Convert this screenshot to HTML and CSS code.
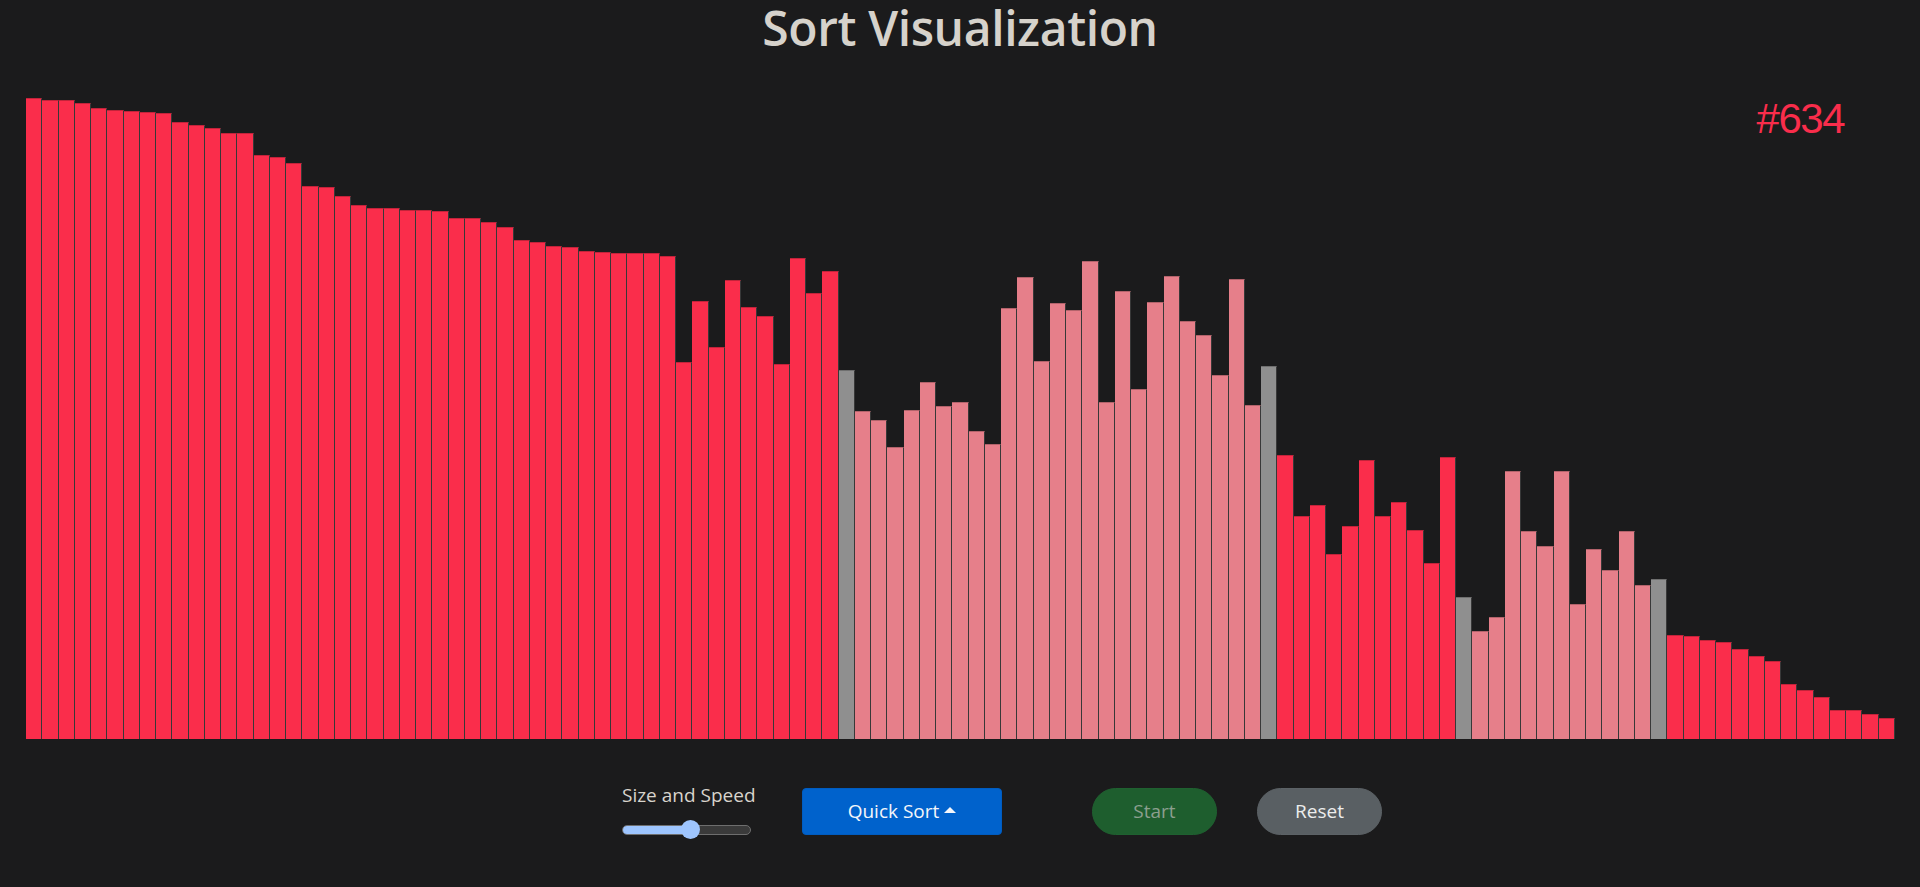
FILE: index.html
```html
<!DOCTYPE html>
<html lang="en">
<head>
<meta charset="utf-8">
<title>Sort Visualization</title>
<link rel="stylesheet" href="styles.css">
</head>
<body>
<h1 class="title">Sort Visualization</h1>
<div class="chart">
  <div class="counter">#634</div>
  <div class="bar red" style="height:641px"></div>
  <div class="bar red" style="height:639.3px"></div>
  <div class="bar red" style="height:639.3px"></div>
  <div class="bar red" style="height:636px"></div>
  <div class="bar red" style="height:631px"></div>
  <div class="bar red" style="height:629.3px"></div>
  <div class="bar red" style="height:628.3px"></div>
  <div class="bar red" style="height:627.3px"></div>
  <div class="bar red" style="height:626px"></div>
  <div class="bar red" style="height:617.3px"></div>
  <div class="bar red" style="height:614.3px"></div>
  <div class="bar red" style="height:611px"></div>
  <div class="bar red" style="height:606px"></div>
  <div class="bar red" style="height:606px"></div>
  <div class="bar red" style="height:584.3px"></div>
  <div class="bar red" style="height:582.3px"></div>
  <div class="bar red" style="height:576px"></div>
  <div class="bar red" style="height:553.3px"></div>
  <div class="bar red" style="height:552.3px"></div>
  <div class="bar red" style="height:543.3px"></div>
  <div class="bar red" style="height:534.3px"></div>
  <div class="bar red" style="height:530.7px"></div>
  <div class="bar red" style="height:530.7px"></div>
  <div class="bar red" style="height:529.3px"></div>
  <div class="bar red" style="height:529.3px"></div>
  <div class="bar red" style="height:528.3px"></div>
  <div class="bar red" style="height:520.7px"></div>
  <div class="bar red" style="height:520.7px"></div>
  <div class="bar red" style="height:517px"></div>
  <div class="bar red" style="height:512px"></div>
  <div class="bar red" style="height:499.3px"></div>
  <div class="bar red" style="height:497px"></div>
  <div class="bar red" style="height:493.3px"></div>
  <div class="bar red" style="height:492px"></div>
  <div class="bar red" style="height:488.3px"></div>
  <div class="bar red" style="height:487px"></div>
  <div class="bar red" style="height:485.7px"></div>
  <div class="bar red" style="height:485.7px"></div>
  <div class="bar red" style="height:485.7px"></div>
  <div class="bar red" style="height:483.3px"></div>
  <div class="bar red" style="height:376.7px"></div>
  <div class="bar red" style="height:438px"></div>
  <div class="bar red" style="height:391.7px"></div>
  <div class="bar red" style="height:459px"></div>
  <div class="bar red" style="height:432px"></div>
  <div class="bar red" style="height:423px"></div>
  <div class="bar red" style="height:375.3px"></div>
  <div class="bar red" style="height:480.7px"></div>
  <div class="bar red" style="height:445.7px"></div>
  <div class="bar red" style="height:468px"></div>
  <div class="bar gray" style="height:369px"></div>
  <div class="bar pink" style="height:328px"></div>
  <div class="bar pink" style="height:319px"></div>
  <div class="bar pink" style="height:291.7px"></div>
  <div class="bar pink" style="height:329px"></div>
  <div class="bar pink" style="height:356.7px"></div>
  <div class="bar pink" style="height:333px"></div>
  <div class="bar pink" style="height:336.7px"></div>
  <div class="bar pink" style="height:308px"></div>
  <div class="bar pink" style="height:295.3px"></div>
  <div class="bar pink" style="height:430.7px"></div>
  <div class="bar pink" style="height:462px"></div>
  <div class="bar pink" style="height:378px"></div>
  <div class="bar pink" style="height:435.7px"></div>
  <div class="bar pink" style="height:429px"></div>
  <div class="bar pink" style="height:478px"></div>
  <div class="bar pink" style="height:336.7px"></div>
  <div class="bar pink" style="height:448px"></div>
  <div class="bar pink" style="height:350.3px"></div>
  <div class="bar pink" style="height:437px"></div>
  <div class="bar pink" style="height:463px"></div>
  <div class="bar pink" style="height:418px"></div>
  <div class="bar pink" style="height:404px"></div>
  <div class="bar pink" style="height:364px"></div>
  <div class="bar pink" style="height:460.3px"></div>
  <div class="bar pink" style="height:334px"></div>
  <div class="bar gray" style="height:373px"></div>
  <div class="bar red" style="height:284px"></div>
  <div class="bar red" style="height:223px"></div>
  <div class="bar red" style="height:234px"></div>
  <div class="bar red" style="height:185px"></div>
  <div class="bar red" style="height:212.7px"></div>
  <div class="bar red" style="height:279px"></div>
  <div class="bar red" style="height:223px"></div>
  <div class="bar red" style="height:236.7px"></div>
  <div class="bar red" style="height:209px"></div>
  <div class="bar red" style="height:176.3px"></div>
  <div class="bar red" style="height:281.7px"></div>
  <div class="bar gray" style="height:141.7px"></div>
  <div class="bar pink" style="height:107.7px"></div>
  <div class="bar pink" style="height:121.7px"></div>
  <div class="bar pink" style="height:268px"></div>
  <div class="bar pink" style="height:208px"></div>
  <div class="bar pink" style="height:192.7px"></div>
  <div class="bar pink" style="height:268px"></div>
  <div class="bar pink" style="height:135.3px"></div>
  <div class="bar pink" style="height:190.3px"></div>
  <div class="bar pink" style="height:169.3px"></div>
  <div class="bar pink" style="height:208px"></div>
  <div class="bar pink" style="height:154.3px"></div>
  <div class="bar gray" style="height:160.3px"></div>
  <div class="bar red" style="height:104px"></div>
  <div class="bar red" style="height:103px"></div>
  <div class="bar red" style="height:99.3px"></div>
  <div class="bar red" style="height:96.7px"></div>
  <div class="bar red" style="height:90.3px"></div>
  <div class="bar red" style="height:83px"></div>
  <div class="bar red" style="height:78px"></div>
  <div class="bar red" style="height:55.3px"></div>
  <div class="bar red" style="height:49.3px"></div>
  <div class="bar red" style="height:41.7px"></div>
  <div class="bar red" style="height:29.3px"></div>
  <div class="bar red" style="height:29.3px"></div>
  <div class="bar red" style="height:25.3px"></div>
  <div class="bar red" style="height:21.3px"></div>
</div>
<div class="controls">
  <div class="speed">
    <div class="speed-label">Size and Speed</div>
    <div class="slider">
      <div class="slider-track"><div class="slider-fill"></div></div>
      <div class="slider-thumb"></div>
    </div>
  </div>
  <button class="btn btn-algo">Quick Sort<span class="caret"></span></button>
  <button class="btn btn-pill btn-start">Start</button>
  <button class="btn btn-pill btn-reset">Reset</button>
</div>
</body>
</html>
```

FILE: styles.css
```css
html, body {
  margin: 0;
  padding: 0;
  background: #1b1b1c;
  height: 100%;
  overflow: hidden;
}

body {
  font-family: "Open Sans", "Noto Sans", sans-serif;
  color: #d6d2cb;
}

.title {
  margin: 0;
  height: 54px;
  line-height: 56px;
  font-size: 48px;
  font-weight: 600;
  text-align: center;
  color: #d6d2cb;
  letter-spacing: -0.4px;
}

.chart {
  position: relative;
  height: 685px;
  margin: 0 26px;
  display: flex;
  align-items: flex-end;
}

.counter {
  position: absolute;
  top: 44px;
  right: 50px;
  font-family: "Liberation Sans", Arial, sans-serif;
  font-size: 42px;
  line-height: 1;
  letter-spacing: -1.5px;
  color: #f92d4b;
}

.bar {
  flex: 1 1 0;
  box-sizing: border-box;
  border-top: 1px solid rgba(0, 0, 0, 0.22);
  border-right: 1px solid #383838;
}

.bar.red { background: #fa2d4b; }
.bar.pink { background: #e67f8a; }
.bar.gray { background: #8f8f8f; }

.controls {
  margin-top: 43px;
  display: flex;
  align-items: flex-start;
  justify-content: center;
  padding-left: 84px;
}

.speed {
  display: flex;
  flex-direction: column;
  width: 133px;
  margin-right: 47px;
}

.speed-label {
  font-size: 19px;
  line-height: 27px;
  color: #d8d4cc;
  white-space: nowrap;
}

.slider {
  position: relative;
  width: 129px;
  height: 19px;
  margin-top: 11px;
}

.slider-track {
  position: absolute;
  left: 0;
  right: 0;
  top: 5px;
  height: 10px;
  box-sizing: border-box;
  border: 1px solid #6e6e6e;
  border-radius: 5px;
  background: #3a3a3a;
  overflow: hidden;
}

.slider-fill {
  width: 68px;
  height: 100%;
  background: #9ec5fe;
}

.slider-thumb {
  position: absolute;
  left: 59px;
  top: 0;
  width: 19px;
  height: 19px;
  border-radius: 50%;
  background: #9ec5fe;
}

.btn {
  margin-top: 6px;
  height: 47px;
  border: 1px solid transparent;
  font-family: "Open Sans", "Noto Sans", sans-serif;
  font-size: 19px;
  line-height: 1;
  padding: 0;
  display: inline-flex;
  align-items: center;
  justify-content: center;
  cursor: pointer;
}

.btn-algo {
  width: 200px;
  background: #0062cc;
  border-color: #005cc0;
  color: #f4f6fa;
  border-radius: 4px;
  margin-right: 90px;
}

.caret {
  display: inline-block;
  margin-left: 5px;
  width: 0;
  height: 0;
  border-left: 6px solid transparent;
  border-right: 6px solid transparent;
  border-bottom: 6px solid #f4f6fa;
  margin-top: -3px;
}

.btn-pill {
  width: 125px;
  border-radius: 24px;
}

.btn-start {
  background: #1e5e2e;
  border-color: #1f6130;
  color: #8c9f8e;
  margin-right: 40px;
}

.btn-reset {
  background: #595f63;
  border-color: #5c6266;
  color: #eceded;
}
```
